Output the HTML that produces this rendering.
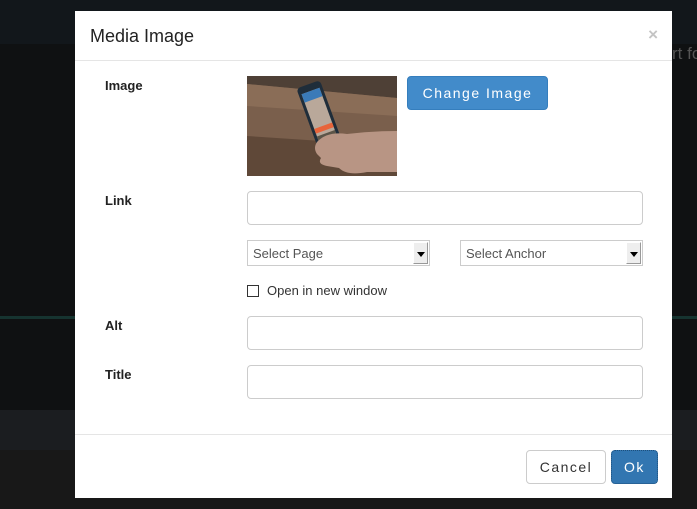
<!DOCTYPE html>
<html><head><meta charset="utf-8"><style>
*{box-sizing:border-box;margin:0;padding:0}
body{width:697px;height:509px;overflow:hidden;background:#0f1112;font-family:"Liberation Sans",sans-serif;position:relative}
.bg1{position:absolute;left:0;top:0;width:697px;height:44px;background:#12171b}
.bg2{position:absolute;left:0;top:316px;width:697px;height:3px;background:#163430}
.bg3{position:absolute;left:0;top:410px;width:697px;height:40px;background:#1b1d20}
.bg4{position:absolute;left:0;top:450px;width:697px;height:59px;background:#181818}
.bgtxt{position:absolute;left:672px;top:44px;color:#555;font-size:17px;white-space:nowrap}
.modal{position:absolute;left:75px;top:11px;width:597px;height:487px;background:#fff}
.hdr{position:absolute;left:0;top:0;width:597px;height:50px;border-bottom:1px solid #e5e5e5}
.hdr h3{position:absolute;left:15px;top:15px;font-size:18px;font-weight:normal;color:#222}
.x{position:absolute;right:14px;top:14px;font-size:17px;color:#c4c4c4;font-weight:bold}
.lbl{position:absolute;left:30px;font-size:13px;font-weight:bold;color:#222}
.inp{position:absolute;left:172px;width:396px;height:34px;border:1px solid #ccc;border-radius:4px}
.sel{position:absolute;top:229px;width:183px;height:26px;border:1px solid #ccc;font-size:13px;color:#555;padding:5px 5px}
.sel .ar{position:absolute;right:1px;top:1px;width:15px;height:22px;background:#eee;border:1px solid #999;border-top-color:#fff;border-left-color:#fff}
.sel .ar:after{content:"";position:absolute;left:3px;top:9px;border-left:4px solid transparent;border-right:4px solid transparent;border-top:5px solid #000}
.btn{position:absolute;border-radius:4px;font-size:14px;letter-spacing:1.5px;text-align:center}
.ftr{position:absolute;left:0;top:423px;width:597px;border-top:1px solid #e5e5e5}
</style></head><body>
<div class="bg1"></div><div class="bg2"></div><div class="bg3"></div><div class="bg4"></div>
<div class="bgtxt">rt fo</div>
<div class="modal">
 <div class="hdr"><h3>Media Image</h3><span class="x">×</span></div>
 <div class="lbl" style="top:67px">Image</div>
 <svg style="position:absolute;left:172px;top:65px" width="150" height="100" viewBox="0 0 150 100">
  <rect width="150" height="100" fill="#7a5f4c"/>
  <polygon points="0,0 150,0 150,22 0,8" fill="#4e4036"/>
  <polygon points="0,8 150,22 150,40 0,30" fill="#8a6d57"/>
  <polygon points="0,60 150,70 150,100 0,100" fill="#5f4838"/>
  <g transform="rotate(-20 75 48)">
   <rect x="63" y="6" width="25" height="78" rx="4" fill="#1f2d3a"/>
   <rect x="66" y="13" width="19" height="62" fill="#b9a89a"/>
   <rect x="66" y="13" width="19" height="9" fill="#3a7ab8"/>
   <rect x="66" y="50" width="19" height="5" fill="#e8643a"/>
   <rect x="66" y="58" width="19" height="17" fill="#5c5548"/>
  </g>
  <path d="M70 66 Q80 55 100 58 Q125 55 150 55 L150 96 L120 96 Q100 100 92 92 L80 90 Q70 88 74 82 L70 78 Q66 72 70 66 Z" fill="#b89584"/>
 </svg>
 <div class="btn" style="left:332px;top:65px;width:141px;height:34px;background:#428bca;border:1px solid #357ebd;color:#fff;line-height:32px">Change Image</div>
 <div class="lbl" style="top:182px">Link</div>
 <div class="inp" style="top:180px"></div>
 <div class="sel" style="left:172px">Select Page<span class="ar"></span></div>
 <div class="sel" style="left:385px">Select Anchor<span class="ar"></span></div>
 <div style="position:absolute;left:172px;top:274px;width:12px;height:12px;border:1px solid #333"></div>
 <div style="position:absolute;left:192px;top:272px;font-size:13px;color:#333">Open in new window</div>
 <div class="lbl" style="top:307px">Alt</div>
 <div class="inp" style="top:305px"></div>
 <div class="lbl" style="top:356px">Title</div>
 <div class="inp" style="top:354px"></div>
 <div class="ftr"></div>
 <div class="btn" style="left:451px;top:439px;width:80px;height:34px;border:1px solid #ccc;color:#333;line-height:32px">Cancel</div>
 <div class="btn" style="left:536px;top:439px;width:47px;height:34px;background:#3276b1;border:1px dotted #1d4f7c;color:#fff;line-height:32px">Ok</div>
</div>
</body></html>
